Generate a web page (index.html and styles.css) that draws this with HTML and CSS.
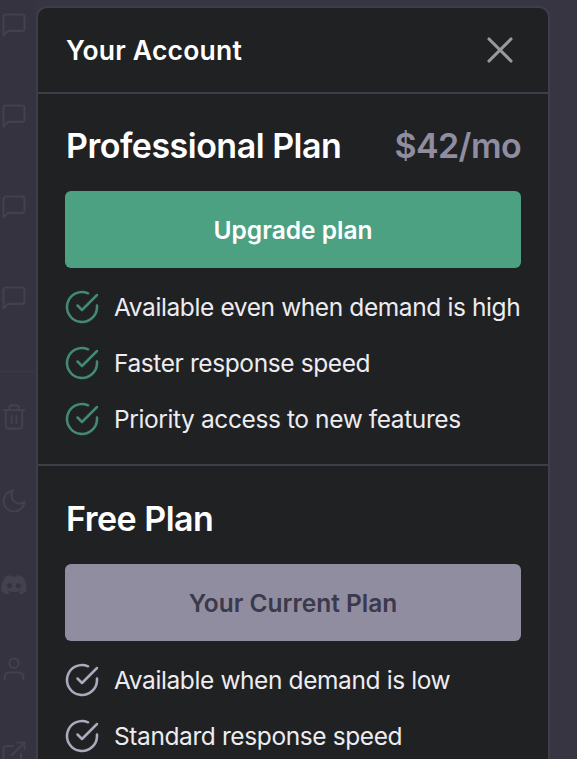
FILE: index.html
```html
<!DOCTYPE html>
<html lang="en">
<head>
<meta charset="utf-8">
<title>Your Account</title>
<link rel="stylesheet" href="styles.css">
</head>
<body>
<svg class="defs" aria-hidden="true">
  <symbol id="message" viewBox="0 0 24 24"><path d="M21 15a2 2 0 0 1-2 2H7l-4 4V5a2 2 0 0 1 2-2h14a2 2 0 0 1 2 2z"/></symbol>
  <symbol id="check" viewBox="0 0 24 24"><path d="M22 11.08V12a10 10 0 1 1-5.93-9.14"/><path d="M22 4L12 14.01l-3-3"/></symbol>
</svg>
<div class="screen">
  <nav class="sidebar">
    <div class="chats">
      <svg class="icon"><use href="#message"/></svg>
      <svg class="icon"><use href="#message"/></svg>
      <svg class="icon"><use href="#message"/></svg>
      <svg class="icon"><use href="#message"/></svg>
    </div>
    <div class="links">
      <svg class="icon" viewBox="0 0 24 24"><path d="M3 6h18M19 6v14a2 2 0 0 1-2 2H7a2 2 0 0 1-2-2V6m3 0V4a2 2 0 0 1 2-2h4a2 2 0 0 1 2 2v2M10 11v6M14 11v6"/></svg>
      <svg class="icon" viewBox="0 0 24 24"><path d="M21 12.79A9 9 0 1 1 11.21 3 7 7 0 0 0 21 12.79z"/></svg>
      <svg class="icon discord" viewBox="0 0 24 24"><path fill-rule="evenodd" d="M19.6 5A18 18 0 0 0 15 3.5l-.7 1.3a16 16 0 0 0-4.6 0L9 3.5A18 18 0 0 0 4.400 5C1.600 9.200.8 13.300 1.200 17.400A18 18 0 0 0 6.700 20.200l1.300-2-1.900-.9.5-.4a12.800 12.800 0 0 0 10.800 0l.5.4-1.900.9 1.300 2a18 18 0 0 0 5.500-2.800C23.300 12.600 22 8.600 19.600 5zM8.300 14.800a2.100 2.200 0 1 1 0-4.400 2.100 2.200 0 0 1 0 4.400zm7.400 0a2.100 2.200 0 1 1 0-4.400 2.100 2.200 0 0 1 0 4.400z"/></svg>
      <svg class="icon" viewBox="0 0 24 24"><path d="M20 21v-2a4 4 0 0 0-4-4H8a4 4 0 0 0-4 4v2"/><circle cx="12" cy="7" r="4"/></svg>
      <svg class="icon" viewBox="0 0 24 24"><path d="M18 13v6a2 2 0 0 1-2 2H5a2 2 0 0 1-2-2V8a2 2 0 0 1 2-2h6M15 3h6v6M10 14L21 3"/></svg>
    </div>
  </nav>
  <main class="modal">
    <header class="header">
      <h1 class="title">Your Account</h1>
      <svg class="close" viewBox="0 0 24 24"><path d="M18 6L6 18M6 6l12 12"/></svg>
    </header>
    <section class="plan">
      <div class="plan-head"><h2 class="name">Professional Plan</h2><span class="name price">$42/mo</span></div>
      <button class="button upgrade">Upgrade plan</button>
      <ul class="features green">
        <li><svg class="check"><use href="#check"/></svg><span>Available even when demand is high</span></li>
        <li><svg class="check"><use href="#check"/></svg><span>Faster response speed</span></li>
        <li><svg class="check"><use href="#check"/></svg><span>Priority access to new features</span></li>
      </ul>
    </section>
    <section class="plan">
      <div class="plan-head"><h2 class="name">Free Plan</h2></div>
      <button class="button current">Your Current Plan</button>
      <ul class="features">
        <li><svg class="check"><use href="#check"/></svg><span>Available when demand is low</span></li>
        <li><svg class="check"><use href="#check"/></svg><span>Standard response speed</span></li>
      </ul>
    </section>
  </main>
</div>
</body>
</html>
```
FILE: styles.css
```css
* { box-sizing: border-box; }
body { margin: 0; background: #363541; font-family: Inter, "Liberation Sans", sans-serif; }
h1, h2, ul { margin: 0; padding: 0; }
svg { fill: none; stroke: currentColor; stroke-width: 2; stroke-linecap: round; stroke-linejoin: round; flex: none; }
.defs { display: none; }
.screen { display: flex; height: 759px; overflow: hidden; }
.sidebar { width: 36px; flex: none; color: #42414d; background: #34333f; }
.icon { display: block; width: 28px; height: 28px; stroke-width: 1.8; }
.chats { display: flex; flex-direction: column; gap: 63px; height: 372px; padding-top: 11px; border-bottom: 1px solid #393844; }
.links { display: flex; flex-direction: column; gap: 56px; padding-top: 31px; }
.discord { fill: currentColor; stroke: none; }
.modal { width: 514px; height: 800px; margin-top: 6px; flex: none; background: #202123; border: 2px solid #3e3d4a; border-radius: 11px 11px 0 0; }
.header { display: flex; align-items: center; justify-content: space-between; height: 86px; padding: 0 27px 0 28px; border-bottom: 2px solid #3e3d48; }
.title { color: #fff; font-size: 26.500px; font-weight: 600; line-height: 34px; letter-spacing: .2px; }
.close { width: 44px; height: 44px; margin-right: -1px; color: #999a9b; stroke-width: 1.700; }
.plan { height: 372px; padding: 32px 27px 0; border-bottom: 2px solid #3e3d48; }
.plan + .plan { padding-top: 33px; }
.plan-head { display: flex; justify-content: space-between; height: 40px; }
.name { margin-left: 1px; color: #fff; font-size: 34px; font-weight: 600; line-height: 40px; letter-spacing: -.5px; white-space: nowrap; }
.price { color: #8f8d9f; letter-spacing: -.6px; }
.button { display: block; width: 456px; height: 77px; margin-top: 25px; padding: 0; border: 0; border-radius: 6px; font-family: inherit; font-size: 24.500px; font-weight: 600; }
.upgrade { background: #4da183; color: #fff; }
.current { background: #8f8d9f; color: #3b394b; }
.features { display: flex; flex-direction: column; gap: 20px; margin-top: 21px; list-style: none; color: #ececf1; font-size: 24.500px; letter-spacing: -.4px; }
.features li { display: flex; align-items: center; gap: 14px; height: 36px; white-space: nowrap; }
.check { width: 36px; height: 36px; margin-left: -1px; color: #acaabd; stroke-width: 1.700; }
.green .check { color: #438a70; }
```
